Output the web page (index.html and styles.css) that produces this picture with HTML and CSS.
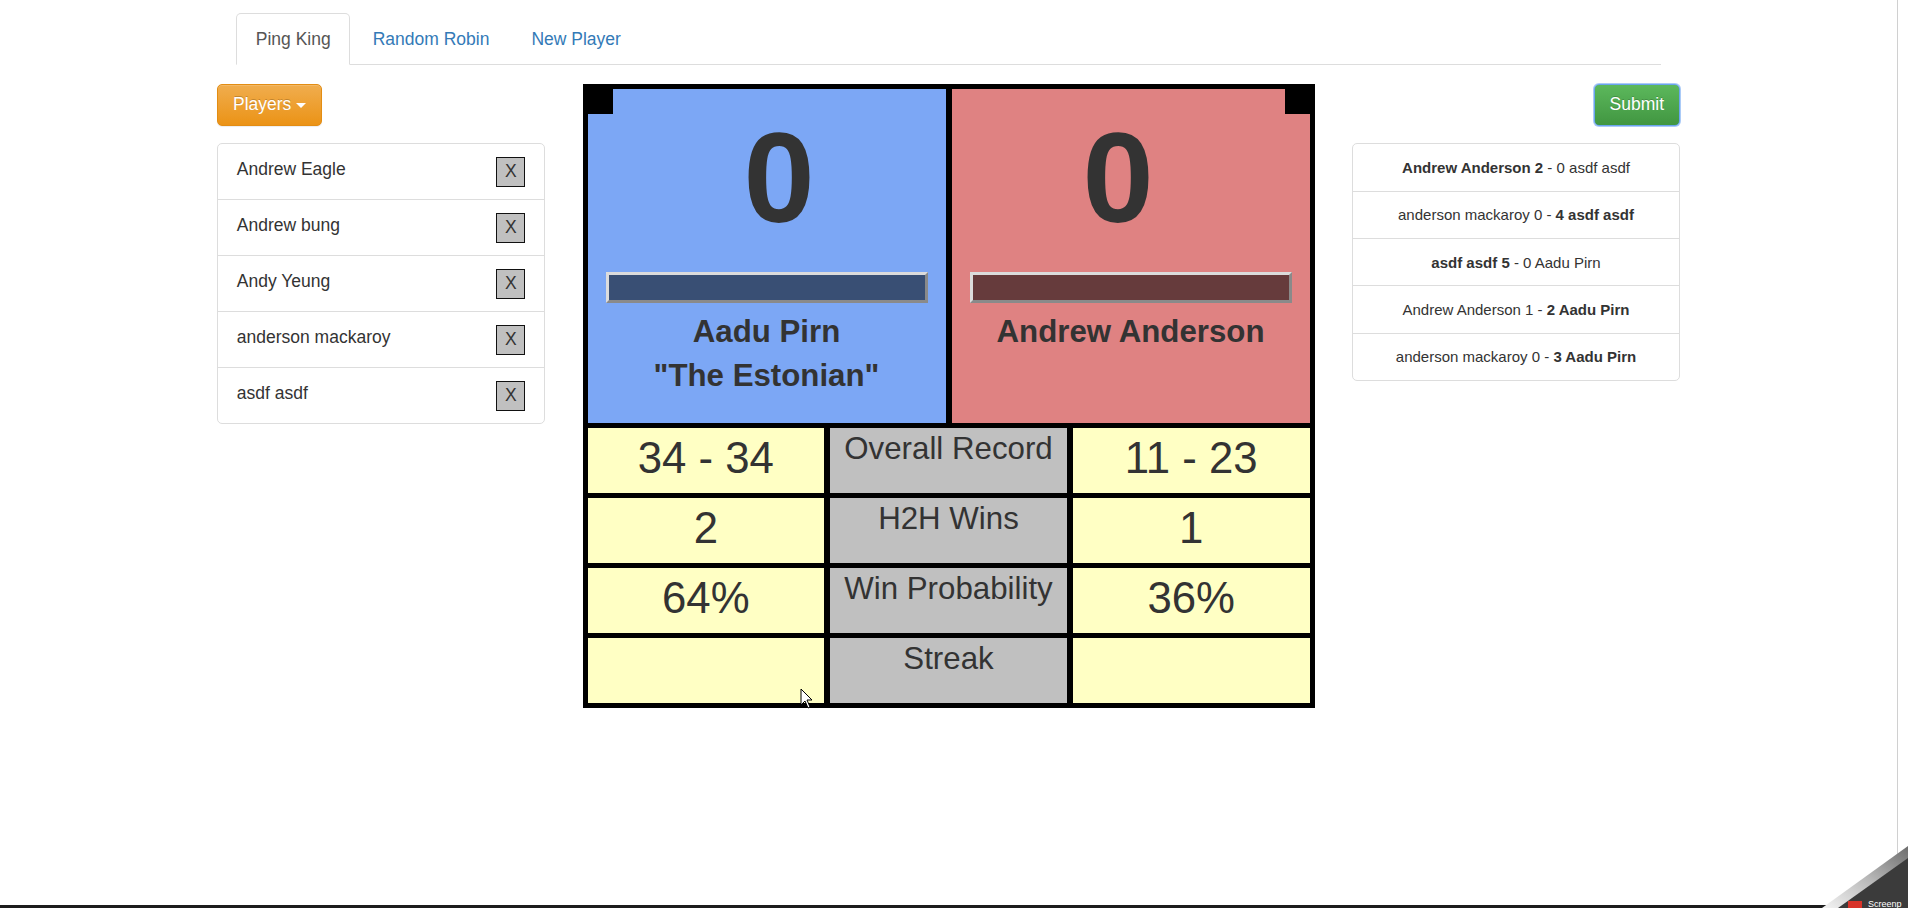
FILE: index.html
```html
<!DOCTYPE html>
<html>
<head>
<meta charset="utf-8">
<title>Ping King</title>
<link rel="stylesheet" href="styles.css">
</head>
<body>
<div class="page">
  <ul class="tabs">
    <li class="tab active">Ping King</li>
    <li class="tab">Random Robin</li>
    <li class="tab">New Player</li>
  </ul>

  <div class="main">
    <div class="side">
      <button class="btn btn-warning">Players <span class="caret"></span></button>
      <div class="list">
        <div class="list-item"><span>Andrew Eagle</span><span class="xbtn">X</span></div>
        <div class="list-item"><span>Andrew bung</span><span class="xbtn">X</span></div>
        <div class="list-item"><span>Andy Yeung</span><span class="xbtn">X</span></div>
        <div class="list-item"><span>anderson mackaroy</span><span class="xbtn">X</span></div>
        <div class="list-item"><span>asdf asdf</span><span class="xbtn">X</span></div>
      </div>
    </div>

    <div class="board">
      <div class="players">
        <div class="panel blue">
          <div class="corner left"></div>
          <div class="score">0</div>
          <div class="bar"></div>
          <div class="name">Aadu Pirn<br>"The Estonian"</div>
        </div>
        <div class="panel red">
          <div class="corner right"></div>
          <div class="score">0</div>
          <div class="bar"></div>
          <div class="name">Andrew Anderson</div>
        </div>
      </div>
      <div class="stats">
        <div class="val">34 - 34</div>
        <div class="label">Overall Record</div>
        <div class="val">11 - 23</div>
        <div class="val">2</div>
        <div class="label">H2H Wins</div>
        <div class="val">1</div>
        <div class="val">64%</div>
        <div class="label">Win Probability</div>
        <div class="val">36%</div>
        <div class="val"></div>
        <div class="label">Streak</div>
        <div class="val"></div>
      </div>
    </div>

    <div class="side">
      <div class="submit-row"><button class="btn btn-success">Submit</button></div>
      <div class="list games">
        <div class="game"><b>Andrew Anderson 2</b> - 0 asdf asdf</div>
        <div class="game">anderson mackaroy 0 - <b>4 asdf asdf</b></div>
        <div class="game"><b>asdf asdf 5</b> - 0 Aadu Pirn</div>
        <div class="game">Andrew Anderson 1 - <b>2 Aadu Pirn</b></div>
        <div class="game">anderson mackaroy 0 - <b>3 Aadu Pirn</b></div>
      </div>
    </div>
  </div>
</div>

<svg class="cursor" width="14" height="22" viewBox="0 0 14 22">
  <path d="M1 1 L1 17 L5 13 L8 20 L10 19 L7 12 L12 12 Z" fill="#fff" stroke="#000" stroke-width="1"/>
</svg>

<div class="edge"></div>
<div class="bottom-strip"></div>
<svg class="curl" width="90" height="62" viewBox="0 0 90 62">
  <defs>
    <linearGradient id="cg" x1="0" y1="1" x2="1" y2="0">
      <stop offset="0" stop-color="#f4f4f4"/>
      <stop offset="0.5" stop-color="#b9b9b9"/>
      <stop offset="1" stop-color="#6d6d6d"/>
    </linearGradient>
  </defs>
  <polygon points="12,62 90,4 90,62" fill="#3b3b3b"/>
  <polygon points="4,62 90,0 90,12 20,62" fill="url(#cg)"/>
  <rect x="30" y="55" width="14" height="7" fill="#d8342a"/>
  <text x="50" y="61" font-family="Liberation Sans, Arial, sans-serif" font-size="9" fill="#fff">Screenp</text>
</svg>
</body>
</html>
```

FILE: styles.css
```css
* { box-sizing: border-box; }

html, body {
  margin: 0;
  padding: 0;
  background: #fff;
}

body {
  font-family: "Liberation Sans", Arial, Helvetica, sans-serif;
  font-size: 17.5px;
  line-height: 1.42857;
  color: #333;
  width: 1908px;
  height: 908px;
  overflow: hidden;
  position: relative;
}

.page {
  width: 1463px;
  margin-left: 217px;
  padding-top: 13px;
}

/* tabs */
.tabs {
  list-style: none;
  margin: 0 19px;
  padding: 0;
  display: flex;
  border-bottom: 1.25px solid #ddd;
}

.tab {
  padding: 12.5px 18.75px;
  line-height: 25px;
  margin-right: 2.5px;
  margin-bottom: -1.25px;
  border: 1.25px solid transparent;
  border-radius: 5px 5px 0 0;
  color: #337ab7;
}

.tab.active {
  color: #555;
  background: #fff;
  border-color: #ddd;
  border-bottom-color: transparent;
}

/* layout */
.main {
  display: flex;
  align-items: flex-start;
  gap: 37.5px;
  margin-top: 19px;
}

.side {
  width: 328px;
  flex: none;
}

/* buttons */
.btn {
  font-family: inherit;
  font-size: 17.5px;
  line-height: 25px;
  padding: 7.5px 15px;
  border-radius: 5px;
  border: 1.25px solid transparent;
  color: #fff;
  text-shadow: 0 -1px 0 rgba(0, 0, 0, .2);
  box-shadow: inset 0 1px 0 rgba(255, 255, 255, .15), 0 1px 1px rgba(0, 0, 0, .075);
  display: inline-block;
  margin: 0;
  cursor: pointer;
}

.btn-warning {
  background-image: linear-gradient(to bottom, #f0ad4e 0, #eb9316 100%);
  border-color: #e38d13;
}

.btn-success {
  background-image: linear-gradient(to bottom, #5cb85c 0, #419641 100%);
  border-color: #6aa4ee;
  box-shadow: 0 0 0 1px rgba(102, 160, 240, .55);
}

.caret {
  display: inline-block;
  width: 0;
  height: 0;
  margin-left: 0;
  vertical-align: middle;
  border-top: 5px solid #fff;
  border-right: 5px solid transparent;
  border-left: 5px solid transparent;
}

.submit-row {
  display: flex;
  justify-content: flex-end;
}

/* list groups */
.list {
  margin-top: 17.5px;
  border: 1.25px solid #ddd;
  border-radius: 5px;
  background: #fff;
}

.list-item {
  display: flex;
  justify-content: space-between;
  align-items: flex-start;
  padding: 12.5px 18.75px;
  line-height: 25px;
  border-top: 1.25px solid #ddd;
}

.list-item:first-child { border-top: none; }

.xbtn {
  width: 29px;
  height: 30px;
  background: #c0c0c0;
  border: 1.25px solid #111;
  display: flex;
  align-items: center;
  justify-content: center;
  font-size: 17.5px;
  line-height: 1;
  color: #333;
}

.game {
  text-align: center;
  font-size: 15px;
  line-height: 21.4px;
  padding: 12.5px 18.75px;
  border-top: 1.25px solid #ddd;
}

.game:first-child { border-top: none; }

/* board */
.board {
  width: 732px;
  flex: none;
  background: #000;
  padding: 5px;
}

.players {
  display: grid;
  grid-template-columns: 1fr 1fr;
  column-gap: 6px;
}

.panel {
  height: 334px;
  text-align: center;
  font-weight: bold;
}

.blue { background: #7ca7f5; }
.red { background: #df8282; }

.corner {
  width: 25px;
  height: 25px;
  background: #000;
}

.corner.left { float: left; }
.corner.right { float: right; }

.score {
  font-size: 128px;
  line-height: 1.1;
  margin-top: 19px;
  color: #333;
}

.bar {
  height: 31px;
  margin: 23px 18px 0;
  border: 3px solid;
  border-color: #dcdcdc #8a8a8a #8a8a8a #dcdcdc;
}

.blue .bar { background: #394f74; }
.red .bar { background: #663b3c; }

.name {
  margin-top: 7px;
  font-size: 31.25px;
  line-height: 44.6px;
  color: #333;
}

.stats {
  display: grid;
  grid-template-columns: repeat(3, 1fr);
  grid-auto-rows: 65px;
  column-gap: 6px;
  row-gap: 5px;
  margin-top: 5px;
}

.val {
  background: #ffffc4;
  display: flex;
  align-items: center;
  justify-content: center;
  font-size: 43.75px;
  line-height: 1.25;
  padding-bottom: 3px;
  color: #333;
}

.label {
  background: #c0c0c0;
  text-align: center;
  font-size: 31.25px;
  line-height: 1.25;
  padding-top: 1px;
  color: #333;
}

/* overlays */
.cursor {
  position: absolute;
  left: 800px;
  top: 688px;
}

.edge {
  position: absolute;
  left: 1897px;
  top: 0;
  width: 1px;
  height: 908px;
  background: #d0d0d0;
}

.bottom-strip {
  position: absolute;
  left: 0;
  bottom: 0;
  width: 1908px;
  height: 3px;
  background: #1c1c1c;
}

.curl {
  position: absolute;
  right: 0;
  bottom: 0;
}
```
